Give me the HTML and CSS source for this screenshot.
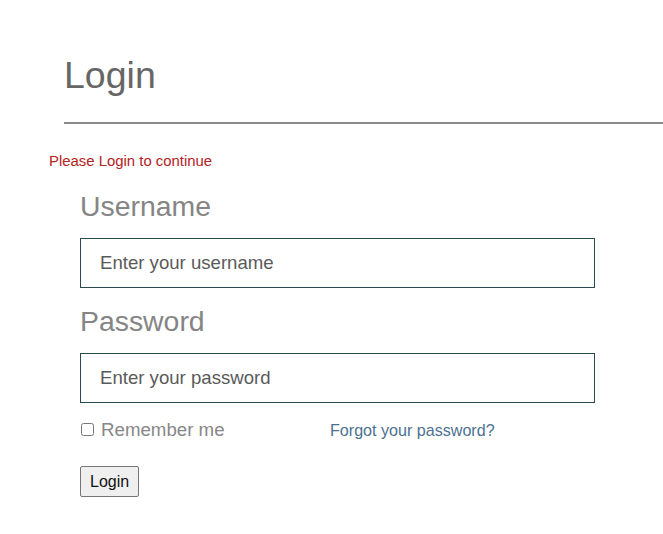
FILE: index.html
```html
<!DOCTYPE html>
<html lang="en">
<head>
<meta charset="utf-8">
<title>Login</title>
<link rel="stylesheet" href="styles.css">
</head>
<body>
<div class="wrap">
  <h1 class="title">Login</h1>
  <p class="alert">Please Login to continue</p>
  <form class="login-form">
    <div class="group">
      <label class="field-label" for="username">Username</label>
      <input class="field" id="username" type="text" placeholder="Enter your username">
    </div>
    <div class="group group-pw">
      <label class="field-label" for="password">Password</label>
      <input class="field" id="password" type="password" placeholder="Enter your password">
    </div>
    <div class="options">
      <label class="remember"><input class="check" type="checkbox">Remember me</label>
      <a class="forgot" href="#">Forgot your password?</a>
    </div>
    <button class="btn" type="button">Login</button>
  </form>
</div>
</body>
</html>
```
FILE: styles.css
```css
html, body {
  margin: 0;
  padding: 0;
  background: #ffffff;
  font-family: "Liberation Sans", Arial, sans-serif;
}

.wrap {
  padding-left: 49px;
  padding-top: 53px;
  overflow: hidden;
}

.title {
  margin: 0 0 0 15px;
  font-size: 37.5px;
  font-weight: normal;
  line-height: 44px;
  color: #666666;
  padding-bottom: 25px;
  border-bottom: 2px solid #8a8a8a;
}

.alert {
  margin: 28px 0 0 0;
  font-size: 14.9px;
  line-height: 18px;
  color: #b42222;
}

.login-form {
  padding-left: 31px;
  width: 515px;
}

.group {
  margin-top: 20px;
}

.group-pw {
  margin-top: 17px;
}

.field-label {
  display: block;
  font-size: 28.4px;
  line-height: 32px;
  color: #858585;
  margin-bottom: 16px;
}

.field {
  display: block;
  box-sizing: border-box;
  width: 515px;
  height: 50px;
  margin: 0;
  padding: 0 19px;
  border: 1px solid #2b4a50;
  border-radius: 0;
  background: #ffffff;
  font-family: "Liberation Sans", Arial, sans-serif;
  font-size: 18.6px;
  color: #333;
  outline: none;
}

.field::placeholder {
  color: #5a5a5a;
  opacity: 1;
}

.options {
  display: grid;
  grid-template-columns: 250px 1fr;
  align-items: baseline;
  margin-top: 16px;
  line-height: 22px;
}

.remember {
  font-size: 18.7px;
  color: #878787;
}

.check {
  width: 13px;
  height: 13px;
  margin: 0 7px 1px 1px;
  vertical-align: baseline;
}

.forgot {
  font-size: 16.1px;
  color: #4c7190;
  text-decoration: none;
}

.btn {
  display: block;
  margin-top: 25px;
  padding: 5px 9px;
  font-family: "Liberation Sans", Arial, sans-serif;
  font-size: 16px;
  line-height: 19px;
  color: #111111;
  background: #efefef;
  border: 1px solid #767676;
  border-radius: 2px;
}
```
